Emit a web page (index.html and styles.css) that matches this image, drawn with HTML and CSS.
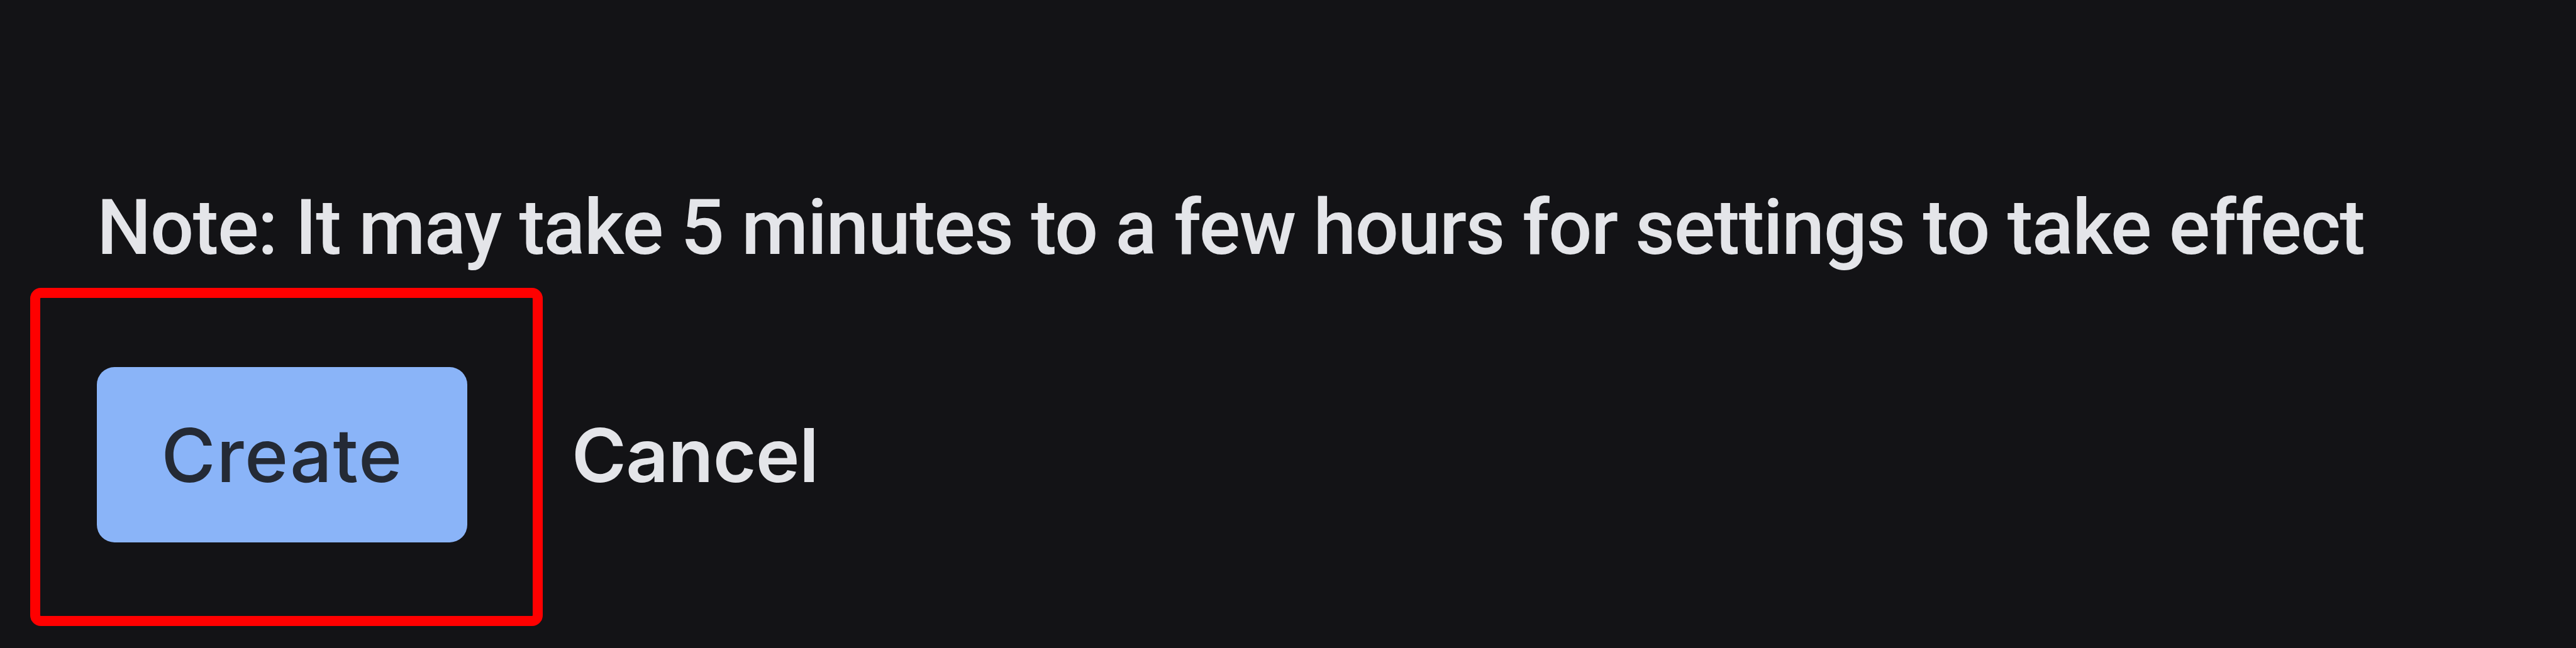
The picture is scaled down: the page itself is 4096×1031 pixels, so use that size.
FILE: index.html
```html
<!DOCTYPE html>
<html lang="en">
<head>
<meta charset="utf-8">
<title>Create</title>
<link rel="stylesheet" href="styles.css">
</head>
<body>
<main class="panel">
  <p class="note">Note: It may take 5 minutes to a few hours for settings to take effect</p>
  <div class="actions">
    <div class="highlight"><button class="create">Create</button></div>
    <button class="cancel">Cancel</button>
  </div>
</main>
</body>
</html>
```
FILE: styles.css
```css
* { box-sizing: border-box; }
body { margin: 0; background: #131316; }
.panel { height: 1031px; padding: 290px 0 0 48px; overflow: hidden; }
.note { margin: 0 0 0 106px; height: 168px; font: 500 122px/146px Roboto, sans-serif; letter-spacing: -1.5px; color: #e4e5e9; white-space: nowrap; }
.actions { display: flex; align-items: center; gap: 46px; }
.highlight { width: 815px; height: 538px; border: 16.5px solid #f00; border-radius: 17px; padding: 110px 90px; }
button { border: 0; padding: 0; background: none; font: 500 118px/1 Inter, sans-serif; }
.create { width: 589px; height: 279px; border-radius: 28px; background: #8ab4f8; color: #242a35; letter-spacing: 1.5px; }
.cancel { padding-bottom: 7px; font-weight: 600; color: #e4e5e9; letter-spacing: -0.7px; }
```
